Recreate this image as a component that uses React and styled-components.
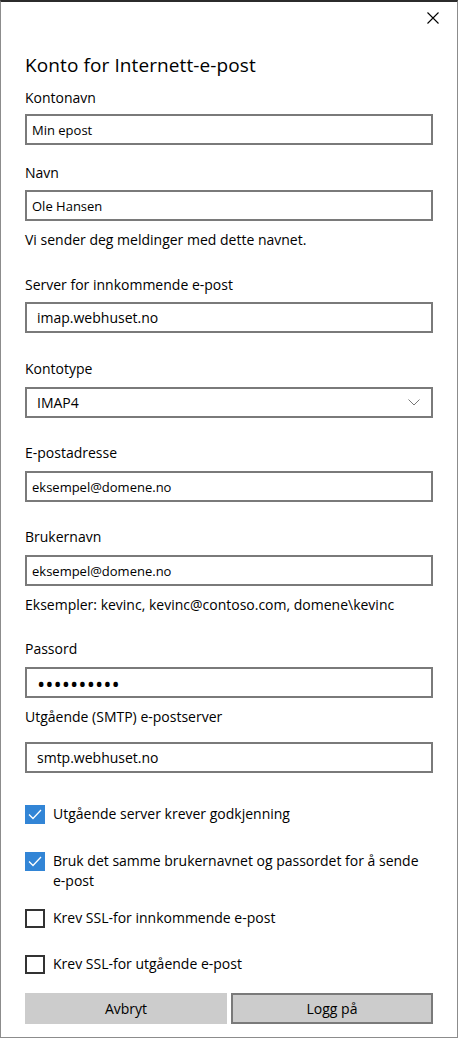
import React from 'react';
import styled, { createGlobalStyle } from 'styled-components';

const Global = createGlobalStyle`
  * { box-sizing: border-box; }
  body {
    margin: 0;
    background: #fff;
    font-family: "Open Sans", "Noto Sans", sans-serif;
    color: #000;
  }
`;

const Window = styled.div`
  width: 458px;
  height: 1038px;
  background: #fff;
  border-top: 2px solid #2b2b2b;
  border-left: 1px solid #8c8c8c;
  border-right: 1px solid #8c8c8c;
  border-bottom: 1px solid #8c8c8c;
  display: flex;
  flex-direction: column;
`;

const TitleBar = styled.div`
  height: 32px;
  display: flex;
  justify-content: flex-end;
  align-items: center;
  padding-right: 17px;
`;

const CloseButton = styled.button`
  width: 14px;
  height: 14px;
  padding: 0;
  border: none;
  background: transparent;
  display: flex;
  align-items: center;
  justify-content: center;
  cursor: pointer;
`;

const Content = styled.div`
  padding: 0 23px 0 24px;
  display: flex;
  flex-direction: column;
`;

const Title = styled.h1`
  margin: 17px 0 0;
  font-size: 19px;
  font-weight: 400;
  line-height: 28px;
  letter-spacing: 0.1px;
`;

const Label = styled.div`
  margin-top: ${(p) => p.$top}px;
  font-size: 14px;
  line-height: 20px;
`;

const Hint = styled.div`
  margin-top: ${(p) => p.$top}px;
  font-size: 14px;
  line-height: 20px;
`;

const TextBox = styled.input`
  display: block;
  width: 408px;
  height: 31px;
  margin-top: ${(p) => p.$top}px;
  border: 2px solid #7a7a7a;
  background: #fff;
  outline: none;
  font-family: "Open Sans", "Noto Sans", sans-serif;
  color: #000;
  font-size: ${(p) => (p.$small ? '13px' : '14px')};
  padding: 0 0 0 ${(p) => (p.$small ? '5px' : '10px')};
`;

const PasswordBox = styled(TextBox)`
  font-size: 22px;
  letter-spacing: 0;
`;

const Select = styled.div`
  width: 408px;
  height: 31px;
  margin-top: ${(p) => p.$top}px;
  border: 2px solid #7a7a7a;
  display: flex;
  align-items: center;
  justify-content: space-between;
  padding: 0 11px 0 10px;
  font-size: 14px;
`;

const CheckRow = styled.label`
  margin-top: ${(p) => p.$top}px;
  display: flex;
  align-items: flex-start;
  gap: 8px;
  font-size: 14px;
  line-height: 20px;
`;

const Box = styled.span`
  flex: none;
  width: 20px;
  height: 19px;
  margin-top: 1px;
  display: flex;
  align-items: center;
  justify-content: center;
  background: ${(p) => (p.$checked ? '#3285d6' : '#fff')};
  border: ${(p) => (p.$checked ? 'none' : '2px solid #333')};
`;

const Buttons = styled.div`
  margin-top: 19px;
  display: grid;
  grid-template-columns: 1fr 1fr;
  gap: 4px;
  width: 408px;
`;

const Button = styled.button`
  height: 31px;
  background: #cccccc;
  border: 2px solid ${(p) => (p.$primary ? '#7a7a7a' : '#cccccc')};
  font-family: "Open Sans", "Noto Sans", sans-serif;
  font-size: 14px;
  color: #000;
  padding: 0;
`;

const Check = ({ checked, top, children }) => (
  <CheckRow $top={top}>
    <Box $checked={checked}>
      {checked && (
        <svg width="14" height="11" viewBox="0 0 14 11">
          <path d="M1 5.5 L5 9.5 L13 1" fill="none" stroke="#fff" strokeWidth="1.3" />
        </svg>
      )}
    </Box>
    <span>{children}</span>
  </CheckRow>
);

export default function App() {
  return (
    <>
      <Global />
      <Window>
        <TitleBar>
          <CloseButton aria-label="Lukk">
            <svg width="12" height="12" viewBox="0 0 12 12">
              <path d="M0.5 0.5 L11.5 11.5 M11.5 0.5 L0.5 11.5" stroke="#000" strokeWidth="1.1" />
            </svg>
          </CloseButton>
        </TitleBar>
        <Content>
          <Title>Konto for Internett-e-post</Title>

          <Label $top={9}>Kontonavn</Label>
          <TextBox $top={6} $small readOnly defaultValue="Min epost" />

          <Label $top={18}>Navn</Label>
          <TextBox $top={7} $small readOnly defaultValue="Ole Hansen" />
          <Hint $top={9}>Vi sender deg meldinger med dette navnet.</Hint>

          <Label $top={25}>Server for innkommende e-post</Label>
          <TextBox $top={7} readOnly defaultValue="imap.webhuset.no" />

          <Label $top={26}>Kontotype</Label>
          <Select $top={8}>
            <span>IMAP4</span>
            <svg width="12" height="7" viewBox="0 0 12 7">
              <path d="M0.5 0.5 L6 6 L11.5 0.5" fill="none" stroke="#777" strokeWidth="1" />
            </svg>
          </Select>

          <Label $top={25}>E-postadresse</Label>
          <TextBox $top={8} $small readOnly defaultValue="eksempel@domene.no" />

          <Label $top={25}>Brukernavn</Label>
          <TextBox $top={8} $small readOnly defaultValue="eksempel@domene.no" />
          <Hint $top={9}>Eksempler: kevinc, kevinc@contoso.com, domene\kevinc</Hint>

          <Label $top={24}>Passord</Label>
          <PasswordBox $top={8} type="password" readOnly defaultValue="hemmelig12" />

          <Label $top={9}>Utgående (SMTP) e-postserver</Label>
          <TextBox $top={15} readOnly defaultValue="smtp.webhuset.no" />

          <Check checked top={31}>Utgående server krever godkjenning</Check>
          <Check checked top={27}>
            Bruk det samme brukernavnet og passordet for å sende
            <br />
            e-post
          </Check>
          <Check top={17}>Krev SSL-for innkommende e-post</Check>
          <Check top={26}>Krev SSL-for utgående e-post</Check>

          <Buttons>
            <Button>Avbryt</Button>
            <Button $primary>Logg på</Button>
          </Buttons>
        </Content>
      </Window>
    </>
  );
}
